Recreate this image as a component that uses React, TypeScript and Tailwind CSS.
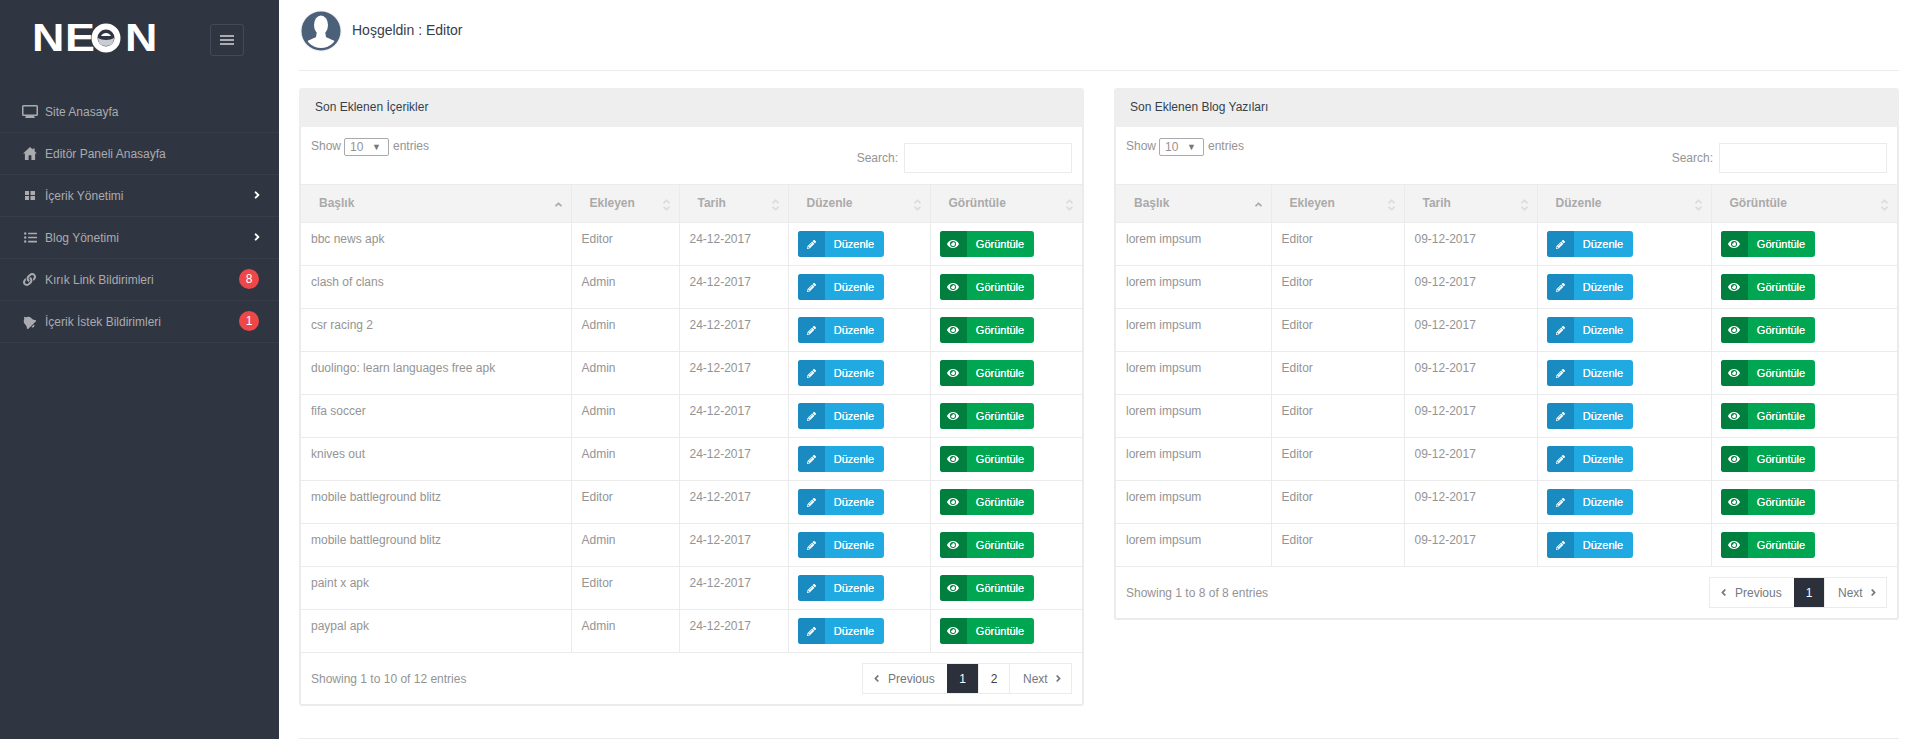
import React from "react";
import { FaEye, FaPencilAlt, FaLink, FaBell, FaAngleRight, FaAngleLeft, FaAngleUp, FaAngleDown, FaListUl } from "react-icons/fa";

const Monitor = () => (
  <svg width="16" height="13" viewBox="0 0 16 13"><path fill="#aaabae" d="M1.500 0h13A1.500 1.500 0 0 1 16 1.500v8A1.500 1.500 0 0 1 14.500 11H12l1 2H3l1-2H1.500A1.500 1.500 0 0 1 0 9.500v-8A1.500 1.500 0 0 1 1.500 0zM1.500 1.400v8h13v-8z" fillRule="evenodd"/></svg>
);
const Grid = () => (
  <svg width="10" height="9" viewBox="0 0 10 9" className="ml-[3px]"><path fill="#aaabae" d="M0 0h4v4H0zM5.500 0H10v4H5.500zM0 5h4v4H0zM5.500 5H10v4H5.500z"/></svg>
);
const Home = () => (
  <svg width="14" height="13" viewBox="0 0 15 14" className="ml-[1px]"><path fill="#aaabae" d="M7.500 0L10.500 2.800V1.500H12.500V4.700L15 7H13V14H9V9H6V14H2V7H0z"/></svg>
);

const items: { label: string; icon: React.ReactNode; chevron?: boolean; badge?: string }[] = [
  { label: "Site Anasayfa", icon: <Monitor /> },
  { label: "Editör Paneli Anasayfa", icon: <Home /> },
  { label: "İçerik Yönetimi", icon: <Grid />, chevron: true },
  { label: "Blog Yönetimi", icon: <FaListUl size={13} className="ml-[2px]" />, chevron: true },
  { label: "Kırık Link Bildirimleri", icon: <FaLink size={13} className="ml-[1px]" />, badge: "8" },
  { label: "İçerik İstek Bildirimleri", icon: <FaBell size={14} className="-rotate-45" />, badge: "1" },
];

const Sidebar = () => (
  <aside className="w-[279px] shrink-0 bg-[#303641] min-h-[739px]">
    <div className="h-[91px] flex items-start">
      <div className="ml-[32px] mt-[19px] w-[123px] h-[38px] flex items-center text-white font-bold text-[38px] leading-[38px]">
        <span className="inline-block w-[33px] scale-x-[1.18] origin-left">N</span>
        <span className="inline-block w-[26px] scale-x-[1.18] origin-left">E</span>
        <svg width="30" height="30" viewBox="0 0 30 30" className="shrink-0 mr-[4px]">
          <circle cx="15" cy="15" r="11.500" fill="none" stroke="#fff" strokeWidth="6" />
          <path d="M7 15c4 2.500 12 2.500 16 0c0 5-3 8-8 8s-8-3-8-8z" fill="#c9ccd2" />
          <path d="M10 13c2-4 8-4 10 0z" fill="#fff" />
        </svg>
        <span className="inline-block scale-x-[1.18] origin-left">N</span>
      </div>
      <button className="ml-[55px] mt-[24px] w-[34px] h-[32px] border border-[#454a54] rounded-[3px] flex flex-col items-center justify-center gap-[2px]">
        <span className="block w-[14px] h-[2px] bg-[#aaabae]" />
        <span className="block w-[14px] h-[2px] bg-[#aaabae]" />
        <span className="block w-[14px] h-[2px] bg-[#aaabae]" />
      </button>
    </div>
    <ul>
      {items.map((it) => (
        <li key={it.label} className="h-[42px] border-b border-[#373e4a] flex items-center pl-[22px] pr-[20px] text-[12px] text-[#aaabae]">
          <span className="w-[23px] flex items-center justify-start shrink-0 text-[#aaabae]">{it.icon}</span>
          <span className="flex-1 pt-[1px]">{it.label}</span>
          {it.chevron && <FaAngleRight size={12} className="text-white -mr-[4px] mb-[1px]" />}
          {it.badge && (
            <span className="w-[20px] h-[20px] rounded-full bg-[#ee4749] text-white text-[12px] flex items-center justify-center mb-[2px]">{it.badge}</span>
          )}
        </li>
      ))}
    </ul>
  </aside>
);

const Sort = ({ up }: { up?: boolean }) => (
  <span className="absolute right-[7px] top-[11px] flex flex-col items-center text-[#dcdcdc]">
    <FaAngleUp size={11} className={up ? "text-[#aaa] mt-[3px]" : "-mb-[4px]"} />
    {!up && <FaAngleDown size={11} />}
  </span>
);

const EditBtn = () => (
  <a className="inline-flex h-[26px] w-[86px] rounded-[3px] overflow-hidden bg-[#21a9e1] text-white text-[11px] align-top [text-shadow:0_0_0.6px_#fff]">
    <span className="w-[27px] h-full bg-[#1a8bc0] flex items-center justify-center"><FaPencilAlt size={9} /></span>
    <span className="flex-1 flex items-center justify-center">Düzenle</span>
  </a>
);
const ViewBtn = () => (
  <a className="inline-flex h-[26px] w-[94px] rounded-[3px] overflow-hidden bg-[#00a651] text-white text-[11px] align-top [text-shadow:0_0_0.6px_#fff]">
    <span className="w-[27px] h-full bg-[#007f3e] flex items-center justify-center"><FaEye size={12} /></span>
    <span className="flex-1 flex items-center justify-center">Görüntüle</span>
  </a>
);

type Row = [string, string, string];

const Panel = ({ title, widths, rows, info, pages }: { title: string; widths: number[]; rows: Row[]; info: string; pages: string[] }) => {
  const heads = ["Başlık", "Ekleyen", "Tarih", "Düzenle", "Görüntüle"];
  return (
    <section>
      <div className="h-[39px] bg-[#eeeeee] rounded-t-[3px] flex items-center pl-[16px] pb-[1px] text-[12px] text-[#373e4a]">{title}</div>
      <div className="border-x-2 border-b-2 border-[#ebebeb] rounded-b-[3px]">
        <div className="h-[57px] flex justify-between px-[10px] text-[12px] text-[#949494]">
          <div className="flex items-start pt-[11px] h-full">
            <span className="leading-[17px] w-[30px]">Show</span>
            <span className="relative ml-[3px] mr-[4px] w-[45px] h-[18px] border border-[#aaa] rounded-[2px] flex items-center pl-[5px] leading-none">
              10
              <span className="absolute right-[7px] top-[4px] text-[9px] leading-[9px] text-[#777]">▼</span>
            </span>
            <span className="leading-[17px]">entries</span>
          </div>
          <div className="flex items-start pt-[16px]">
            <span className="leading-[30px] mr-[6px]">Search:</span>
            <span className="block w-[168px] h-[30px] border border-[#ebebeb]" />
          </div>
        </div>
        <table className="w-full table-fixed border-collapse text-[12px] text-[#949494]">
          <colgroup>
            {widths.map((w, i) => <col key={i} style={{ width: w }} />)}
          </colgroup>
          <thead>
            <tr className="h-[38px] bg-[#f3f3f3] border-y border-[#ebebeb]">
              {heads.map((h, i) => (
                <th key={h} className={"relative text-left font-bold text-[#aaa] pl-[18px] pb-[2px] " + (i < 4 ? "border-r border-[#ebebeb]" : "")}>
                  {h}
                  <Sort up={i === 0} />
                </th>
              ))}
            </tr>
          </thead>
          <tbody>
            {rows.map((r, idx) => (
              <tr key={idx} className="h-[43px] border-b border-[#ebebeb]">
                <td className="align-top pl-[10px] pt-[8px] leading-[17px] border-r border-[#ebebeb]">{r[0]}</td>
                <td className="align-top pl-[10px] pt-[8px] leading-[17px] border-r border-[#ebebeb]">{r[1]}</td>
                <td className="align-top pl-[10px] pt-[8px] leading-[17px] border-r border-[#ebebeb]">{r[2]}</td>
                <td className="align-top pl-[9px] pt-[8px] border-r border-[#ebebeb]"><EditBtn /></td>
                <td className="align-top pl-[9px] pt-[8px]"><ViewBtn /></td>
              </tr>
            ))}
          </tbody>
        </table>
        <div className="h-[51px] flex justify-between px-[10px] text-[12px]">
          <span className="pt-[18px] leading-[17px] text-[#949494]">{info}</span>
          <div className="mt-[10px] h-[31px] flex border border-[#ebebeb] text-[#373e4a]">
            <span className="w-[84px] flex items-center pl-[8px] gap-[6px] text-[#737881]"><FaAngleLeft size={11} /> Previous</span>
            {pages.map((p, i) => (
              <span key={p} className={(pages.length === 1 ? "w-[30px] " : "w-[31px] ") + "flex items-center justify-center " + (i === 0 ? "bg-[#2b303a] text-white" : "border-l border-[#ebebeb]")}>{p}</span>
            ))}
            <span className="w-[62px] flex items-center pl-[13px] gap-[5px] border-l border-[#ebebeb] text-[#737881]">Next <FaAngleRight size={11} /></span>
          </div>
        </div>
      </div>
    </section>
  );
};

const left: Row[] = [
  ["bbc news apk", "Editor"], ["clash of clans", "Admin"], ["csr racing 2", "Admin"], ["duolingo: learn languages free apk", "Admin"],
  ["fifa soccer", "Admin"], ["knives out", "Admin"], ["mobile battleground blitz", "Editor"], ["mobile battleground blitz", "Admin"],
  ["paint x apk", "Editor"], ["paypal apk", "Admin"],
].map((r) => [r[0], r[1], "24-12-2017"] as Row);
const right: Row[] = Array.from({ length: 8 }, () => ["lorem impsum", "Editor", "09-12-2017"] as Row);

export default function App() {
  return (
    <div className="flex h-[739px] bg-white overflow-hidden" style={{ fontFamily: '"Liberation Sans", Arial, sans-serif' }}>
      <Sidebar />
      <main className="flex-1 pl-[20px] pr-[13px]">
        <header className="h-[71px] border-b border-[#ebebeb] pt-[10px] flex items-start">
          <svg width="42" height="42" viewBox="0 0 42 42" className="ml-[1px]">
            <circle cx="21" cy="21" r="20.500" fill="#eef0f2" />
            <circle cx="21" cy="21" r="19.500" fill="#4d6079" />
            <clipPath id="av"><circle cx="21" cy="21" r="17" /></clipPath>
            <g clipPath="url(#av)" fill="#fff">
              <ellipse cx="21" cy="15" rx="7" ry="9.500" />
              <path d="M17 21h8l1 6c3 2 9 3 10 6v8H6v-8c1-3 7-4 10-6z" />
            </g>
          </svg>
          <span className="ml-[10px] mt-[10px] text-[14px] leading-[20px] text-[#373e4a]">Hoşgeldin : Editor</span>
        </header>
        <div className="grid grid-cols-[785px_785px] gap-x-[30px] items-start mt-[17px]">
          <Panel title="Son Eklenen İçerikler" widths={[270, 108, 109, 142, 152]} rows={left} info="Showing 1 to 10 of 12 entries" pages={["1", "2"]} />
          <Panel title="Son Eklenen Blog Yazıları" widths={[155, 133, 133, 174, 186]} rows={right} info="Showing 1 to 8 of 8 entries" pages={["1"]} />
        </div>
        <div className="mt-[32px] border-t border-[#ebebeb]" />
      </main>
    </div>
  );
}
